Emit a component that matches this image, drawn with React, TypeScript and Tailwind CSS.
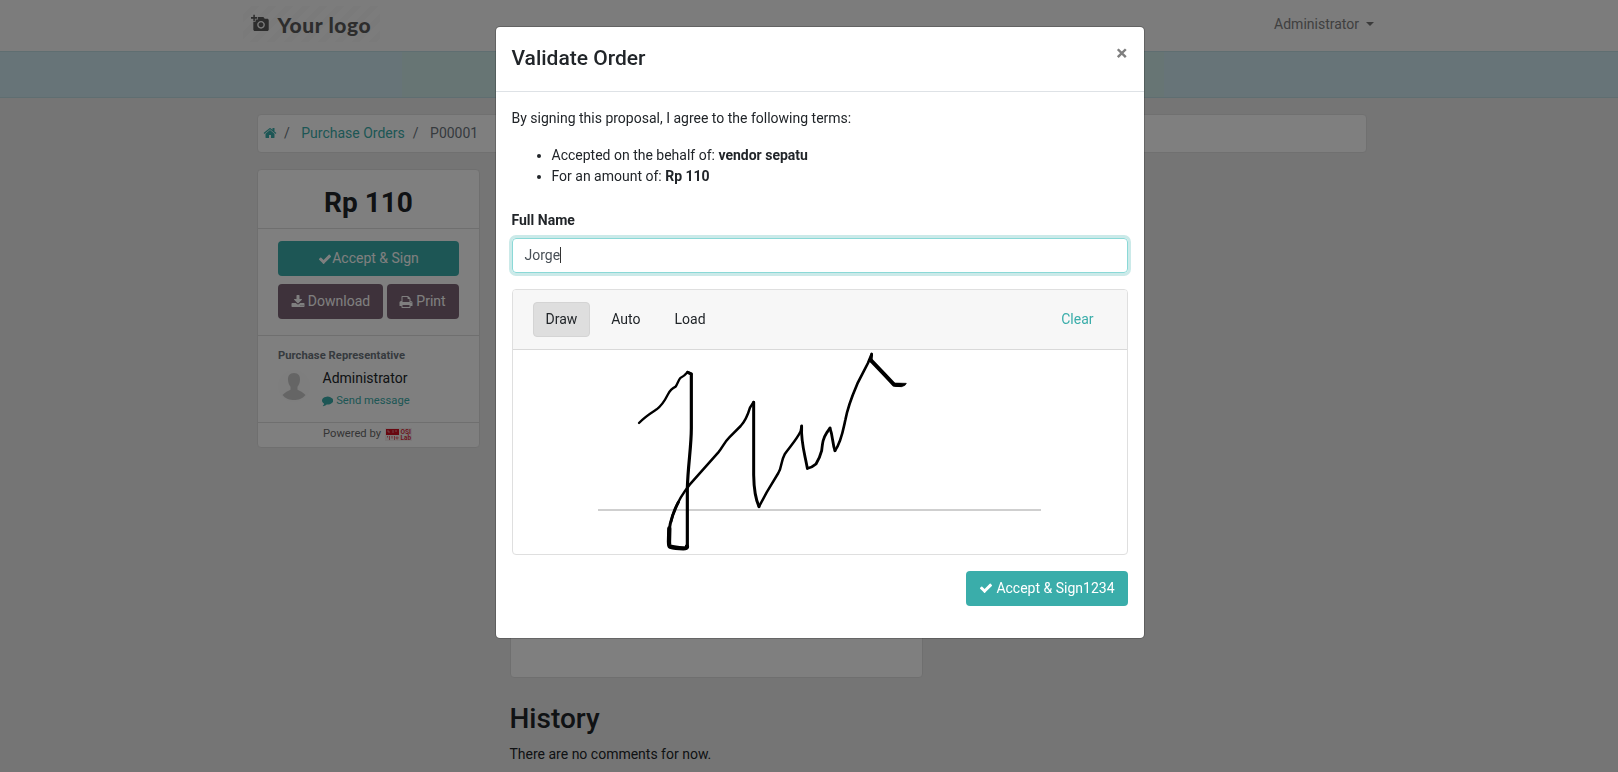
import React from "react";
import { MdAddAPhoto } from "react-icons/md";

const ICONS = {
  check:
    "M1671 566q0 40-28 68l-724 724-136 136q-28 28-68 28t-68-28l-136-136-362-362q-28-28-28-68t28-68l136-136q28-28 68-28t68 28l294 295 656-657q28-28 68-28t68 28l136 136q28 28 28 68z",
  home: "M1472 992v480q0 26-19 45t-45 19h-384v-384h-256v384h-384q-26 0-45-19t-19-45v-480q0-1 .5-3t.5-3l575-474 575 474q1 2 1 6zm223-69l-62 74q-8 9-21 11h-3q-13 0-21-7l-692-577-692 577q-12 8-24 7-13-2-21-11l-62-74q-8-10-7-23.5t11-21.5l719-599q32-26 76-26t76 26l244 204v-195q0-14 9-23t23-9h192q14 0 23 9t9 23v408l219 182q10 8 11 21.5t-7 23.5z",
  download:
    "M1344 1344q0-26-19-45t-45-19-45 19-19 45 19 45 45 19 45-19 19-45zm256 0q0-26-19-45t-45-19-45 19-19 45 19 45 45 19 45-19 19-45zm128-224v320q0 40-28 68t-68 28h-1472q-40 0-68-28t-28-68v-320q0-40 28-68t68-28h465l135 136q58 56 136 56t136-56l136-136h464q40 0 68 28t28 68zm-325-569q17 41-14 70l-448 448q-18 19-45 19t-45-19l-448-448q-31-29-14-70 17-39 59-39h256v-448q0-26 19-45t45-19h256q26 0 45 19t19 45v448h256q42 0 59 39z",
  print:
    "M448 1536h896v-256h-896v256zm0-640h896v-384h-160q-40 0-68-28t-28-68v-160h-640v640zm1152 64q0-26-19-45t-45-19-45 19-19 45 19 45 45 19 45-19 19-45zm128 0v416q0 13-9.5 22.5t-22.5 9.5h-224v160q0 40-28 68t-68 28h-960q-40 0-68-28t-28-68v-160h-224q-13 0-22.5-9.5t-9.5-22.5v-416q0-79 56.5-135.5t135.5-56.5h64v-544q0-40 28-68t68-28h672q40 0 88 20t76 48l152 152q28 28 48 76t20 88v256h64q79 0 135.5 56.5t56.5 135.5z",
  comment:
    "M1792 896q0 174-120 321.5t-326 233-450 85.5q-70 0-145-8-198 175-460 242-49 14-114 22-17 2-30.5-9t-17.5-29v-1q-3-4-.5-12t2-10 4.5-9.5l6-9 7-8.5 8-9q7-8 31-34.5t34.500-38 31-39.500 32.500-51 27-59 26-76q-157-89-247.500-220t-90.500-281q0-130 71-248.500t191-204.500 286-136.500 348-50.500q244 0 450 85.500t326 233 120 321.500z",
};

function Icon({ name, className = "" }: { name: keyof typeof ICONS; className?: string }) {
  return (
    <svg viewBox="0 0 1792 1792" fill="currentColor" className={`shrink-0 ${className || "size-3.5"}`}>
      <path d={ICONS[name]} />
    </svg>
  );
}

function Navbar() {
  return (
    <header className="flex h-[51px] items-start justify-between bg-[#f8f8f8] pr-[244px] pl-[243px]">
      <div className="mt-[6px] flex h-[36px] w-[137px] items-center bg-[repeating-linear-gradient(135deg,#f8f8f8_0_6px,#f4f4f4_6px_12px)] pl-[8px] text-[#5a5a5a]">
        <MdAddAPhoto className="mt-[-1px] size-[18.5px]" />
        <span className="ml-[8px] font-['Lato'] text-[21px] leading-none font-black tracking-[0.6px] whitespace-nowrap">
          Your logo
        </span>
      </div>
      <div className="mt-[14px] flex items-center text-[#808080]">
        Administrator
        <span className="mt-[-2px] ml-[7px] border-x-4 border-t-4 border-x-transparent border-t-[#777]" />
      </div>
    </header>
  );
}

function Sidebar() {
  return (
    <aside className="flex h-[279px] w-[223px] flex-col rounded-[4px] border border-[#dfdfdf] bg-white">
      <h2 className="h-[59px] border-b border-[#dfdfdf] pt-[12px] text-center text-[28px] leading-[42px] font-bold">
        Rp 110
      </h2>
      <div className="h-[107px] border-b border-[#dfdfdf] px-[20px] pt-[12px]">
        <div className="flex h-[35px] items-center justify-center rounded-[4px] bg-[#3aadaa] text-white">
          <Icon name="check" />
          Accept &amp; Sign
        </div>
        <div className="mt-2 flex gap-1 text-white">
          <div className="flex h-[35px] w-[105px] items-center justify-center gap-[3px] rounded-[4px] bg-[#7c6576]">
            <Icon name="download" /> Download
          </div>
          <div className="flex h-[35px] flex-1 items-center justify-center gap-[3px] rounded-[4px] bg-[#7c6576] pr-[1px]">
            <Icon name="print" /> Print
          </div>
        </div>
      </div>
      <div className="h-[87px] border-b border-[#dfdfdf] px-[20px] pt-[11px]">
        <div className="text-[11.200px] leading-[17px] font-bold tracking-[0.05px] text-[#6c757d]">
          Purchase Representative
        </div>
        <div className="mt-[4px] flex gap-[12px]">
          <svg viewBox="0 0 32 32" className="mt-[2px] size-8">
            <rect width="32" height="32" rx="16" fill="#fcfcfc" />
            <path
              d="M16 3c4.500 0 6.300 3 6 7-.2 3.200-1.300 5.200-2.500 6.700v3c2.500 1.500 5.500 2.300 8 5.300C24.500 29 20 30 16 30S7.500 29 4.500 25c2.500-3 5.500-3.800 8-5.300v-3C11.300 15.200 10.200 13.200 10 10c-.3-4 1.500-7 6-7z"
              fill="#cbcbcb"
            />
          </svg>
          <div>
            <div className="indent-[0.5px]">Administrator</div>
            <div className="mt-[3px] flex items-center gap-[3px] text-[11.200px] leading-[18px] text-[#3aadaa]">
              <Icon name="comment" className="size-[11.2px]" />
              Send message
            </div>
          </div>
        </div>
      </div>
      <div className="flex h-[23px] items-start justify-center gap-[4px] pt-[2px] pr-[2px] text-[11.200px] leading-[18px] text-[#6a6a6a]">
        Powered by
        <svg viewBox="0 0 27 13" className="mt-[3px] h-[13px] w-[27px]">
          <rect width="27" height="13" fill="#f5eeee" />
          <path d="M1 1h13v6H1z" fill="#d00f20" />
          <path d="M3 2v2h2M8 2v3M11 2v2" stroke="#f0b8bc" strokeWidth="0.7" fill="none" />
          <path d="M2.500 8v1.500M4.500 8v4M7 8v2.500M9.500 8v4M12 9a1 1 0 1 0 .1 0" stroke="#e06a74" fill="none" />
          <text x="15.500" y="6" fill="#d8303f" fontSize="6.500" fontWeight="700" textLength="10.500" lengthAdjust="spacingAndGlyphs">
            OSI
          </text>
          <text x="15.500" y="12.200" fill="#d8303f" fontSize="6.500" fontWeight="700" textLength="10.500" lengthAdjust="spacingAndGlyphs">
            Lab
          </text>
        </svg>
      </div>
    </aside>
  );
}

function Signature() {
  return (
    <svg viewBox="-231 15 1842 612" className="block h-[204px] w-full" fill="none" stroke="#000" strokeLinecap="round" strokeLinejoin="round">
      <path d="M24 495H1353" stroke="#cfcfcf" strokeWidth="6" strokeLinecap="butt" />
      <path
        strokeWidth="7"
        d="M147 234C166 214 183 204 200 193C218 180 227 162 234 148C240 136 246 130 257 125C263 115 266 104 271 99C279 95 285 91 293 81L304 87"
      />
      <path strokeWidth="9.500" d="M293 82L304 87V250C304 305 294 360 292 430V606" />
      <path strokeWidth="13" d="M291 604Q292 610 280 610Q255 609 240 605Q237 604 237 590L238 550" />
      <path strokeWidth="9" d="M237 590Q235 560 241 535Q250 500 265 472" />
      <path
        strokeWidth="7.500"
        d="M243 530C252 490 270 455 299 419L385 322C400 304 402 293 418 277L452 243C466 228 475 205 480 188L491 171"
      />
      <path strokeWidth="9" d="M491 172V390Q492 452 507 485" />
      <path
        strokeWidth="7.500"
        d="M507 485L530 442L565 384C577 363 571 352 584 328C600 305 620 284 632 259L635 242"
      />
      <path strokeWidth="8.500" d="M635 244C632 290 644 325 652 370" />
      <path strokeWidth="8.500" d="M652 370Q667 367 678 357Q690 337 695 317C698 290 699 281 711 262L720 249" />
      <path strokeWidth="8.500" d="M720 250C729 275 727 295 735 317" />
      <path strokeWidth="8" d="M735 317C754 291 759 257 766 225C775 177 789 147 804 112L834 54L845 27" />
      <path strokeWidth="8.500" d="M845 29L843 48" />
      <path strokeWidth="12" d="M843 46L886 91L912 119L930 120" />
      <path d="M908 114L949 115Q948 122 935 125Q915 127 907 119Z" fill="#000" strokeWidth="2" />
    </svg>
  );
}

function SignModal() {
  return (
    <div className="fixed inset-0 flex items-start bg-black/50 pt-[26px] pl-[494.5px]">
      <div className="h-[613px] w-[650px] rounded-[5px] border border-black/20 bg-white bg-clip-padding">
        <div className="flex h-[64.500px] items-start justify-between border-b border-[#dee2e6] px-4 pt-4">
          <h4 className="text-[21px] leading-[31.500px] font-medium">Validate Order</h4>
          <span className="text-[21px] leading-[21px] font-bold text-[#7f7f7f]">×</span>
        </div>
        <div className="px-4 pt-4">
          <p>By signing this proposal, I agree to the following terms:</p>
          <ul className="mt-4 list-disc pl-10">
            <li>
              Accepted on the behalf of: <b>vendor sepatu</b>
            </li>
            <li>
              For an amount of: <b>Rp 110</b>
            </li>
          </ul>
          <div className="mt-[23px] font-bold">Full Name</div>
          <div className="mt-[7px] flex h-[35px] items-center rounded-[4px] border border-[#8bd9d7] px-3 text-[#495057] shadow-[0_0_0_3px_#cbeae9]">
            Jorge
            <span className="h-4 w-px bg-[#333]" />
          </div>
          <div className="mt-4 overflow-hidden rounded-[4px] border border-[#dfdfdf]">
            <div className="flex h-[60px] items-center border-b border-[#d9d9d9] bg-[#f7f7f7] px-5">
              <div className="rounded-[4px] border border-[#d4d4d4] bg-[#dedede] px-[12px] py-[6px]">Draw</div>
              <div className="ml-[8px] px-[13px]">Auto</div>
              <div className="ml-[8px] px-[13px]">Load</div>
              <div className="ml-auto px-[13px] text-[#3aadaa]">Clear</div>
            </div>
            <Signature />
          </div>
          <div className="mt-4 flex justify-end">
            <div className="flex h-[35px] items-center gap-[3.500px] rounded-[4px] bg-[#3aadaa] px-[13px] text-white">
              <Icon name="check" /> Accept &amp; Sign1234
            </div>
          </div>
        </div>
      </div>
    </div>
  );
}

export default function App() {
  return (
    <div className="h-[772px] overflow-hidden bg-[#ebebeb] font-['Roboto',sans-serif] text-[14px] leading-[21px] text-[#212529]">
      <Navbar />
      <div className="flex h-[47px] border-y border-[#bfdce3] bg-[#cfe9f1] pl-[402px]">
        <div className="w-[762px] bg-[#cfeae8]" />
      </div>
      <main className="pt-[16px] pl-[257px]">
        <nav className="flex h-[39px] w-[1110px] items-center rounded-[4px] border border-[#e0e0e0] bg-white pb-[1px] pl-[5px] text-[#6c757d]">
          <Icon name="home" className="size-3.5 text-[#3aadaa]" />
          <span className="ml-[7px]">/</span>
          <span className="ml-[11.500px] text-[#3aadaa]">Purchase Orders</span>
          <span className="ml-[8px]">/</span>
          <span className="ml-[11.500px]">P00001</span>
        </nav>
        <div className="mt-4 flex gap-[30px]">
          <Sidebar />
          <section>
            <div className="h-[509px] w-[413px] rounded-[4px] border border-[#dfdfdf] bg-white" />
            <h2 className="mt-[20px] text-[28px] leading-[42px] font-medium -indent-[0.5px]">History</h2>
            <p className="mt-[4px] -indent-[0.5px]">There are no comments for now.</p>
          </section>
        </div>
      </main>
      <SignModal />
    </div>
  );
}
